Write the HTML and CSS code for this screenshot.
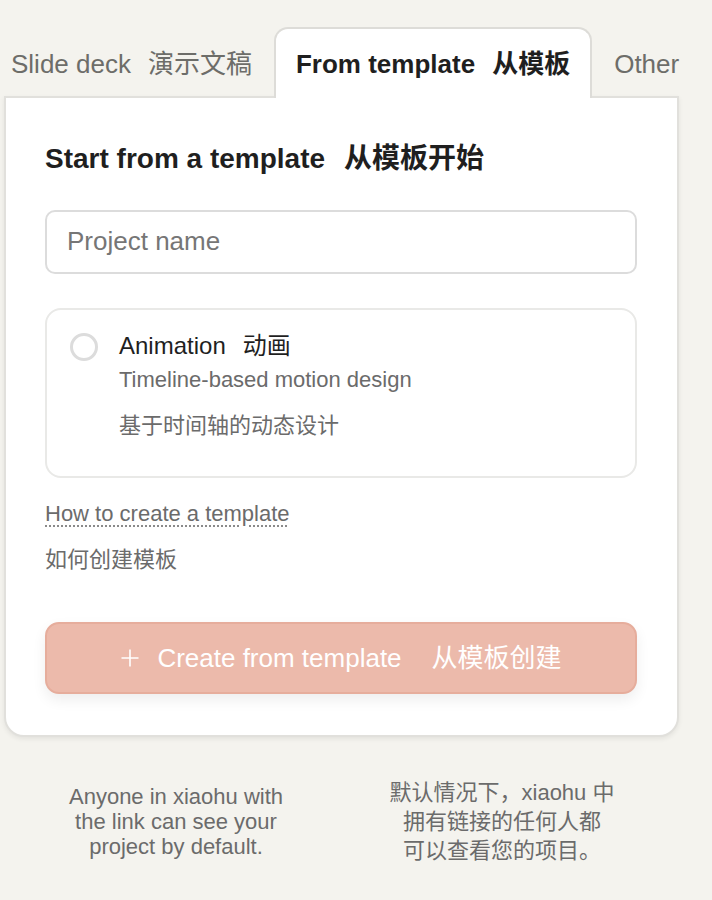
FILE: index.html
```html
<!DOCTYPE html>
<html lang="en">
<head>
<meta charset="utf-8">
<title>From template</title>
<link rel="stylesheet" href="styles.css">
</head>
<body>
<div class="page">
  <div class="tabs">
    <div class="tab">Slide deck<span class="zh">演示文稿</span></div>
    <div class="tab active">From template<span class="zh">从模板</span></div>
    <div class="tab">Other</div>
  </div>
  <div class="card">
    <h2 class="heading">Start from a template<span class="zh-h">从模板开始</span></h2>
    <input class="input" type="text" placeholder="Project name">
    <div class="option">
      <span class="radio"></span>
      <div class="option-body">
        <div class="option-title">Animation<span class="zh-t">动画</span></div>
        <div class="option-desc">Timeline-based motion design</div>
        <div class="option-desc zh-desc">基于时间轴的动态设计</div>
      </div>
    </div>
    <div class="help"><span class="help-link">How to create a template</span></div>
    <div class="help-zh">如何创建模板</div>
    <button class="create" type="button">
      <svg class="plus" width="20" height="20" viewBox="0 0 20 20" aria-hidden="true"><path d="M10 1.5V18.5M1.5 10H18.5" stroke="#ffffff" stroke-width="1.6" fill="none"/></svg>
      <span>Create from template</span><span class="zh-b">从模板创建</span>
    </button>
  </div>
  <div class="footer">
    <p class="note">Anyone in xiaohu with<br>the link can see your<br>project by default.</p>
    <p class="note note-zh">默认情况下，xiaohu 中<br>拥有链接的任何人都<br>可以查看您的项目。</p>
  </div>
</div>
</body>
</html>
```
FILE: styles.css
```css
html, body {
  margin: 0;
  padding: 0;
  background: #f4f3ee;
}
body {
  font-family: "Liberation Sans", "Noto Sans CJK SC", sans-serif;
  color: #222222;
}
.page {
  padding: 27px 0 0 4px;
  width: 675px;
}
.tabs {
  display: flex;
  align-items: flex-end;
  margin-left: -15px;
  margin-bottom: -2px;
  white-space: nowrap;
}
.tab {
  font-size: 26px;
  line-height: 36px;
  padding: 17px 20px 16px;
  border: 2px solid transparent;
  border-bottom: 0;
  color: #6d6d69;
}
.tab .zh {
  margin-left: 17px;
}
.tab.active {
  position: relative;
  z-index: 1;
  background: #ffffff;
  border-color: #dddcd8;
  border-radius: 14px 14px 0 0;
  color: #1f1f1f;
  font-weight: bold;
}
.card {
  background: #ffffff;
  border: 2px solid #e1e0dc;
  border-radius: 0 0 20px 20px;
  box-shadow: 0 2px 5px rgba(0, 0, 0, 0.07);
  padding: 44px 40px 41px 39px;
}
.heading {
  margin: 0;
  font-size: 28px;
  line-height: 33.6px;
  font-weight: bold;
  color: #1f1f1f;
}
.zh-h {
  margin-left: 19px;
}
.input {
  display: block;
  box-sizing: border-box;
  width: 100%;
  height: 64px;
  margin-top: 34px;
  border: 2px solid #dcdcdc;
  border-radius: 10px;
  padding: 0 20px;
  font-family: "Liberation Sans", "Noto Sans CJK SC", sans-serif;
  font-size: 26px;
  color: #222222;
  background: #ffffff;
  outline: none;
}
.input::placeholder {
  color: #767676;
}
.option {
  display: flex;
  align-items: flex-start;
  gap: 21px;
  margin-top: 34px;
  border: 2px solid #e9e9e7;
  border-radius: 16px;
  padding: 22px 24px 36px 23px;
}
.radio {
  flex: none;
  box-sizing: border-box;
  width: 28px;
  height: 28px;
  margin-top: 1px;
  border: 3px solid #dcdcdc;
  border-radius: 50%;
}
.option-title {
  font-size: 24px;
  line-height: 28.8px;
  color: #1f1f1f;
}
.zh-t {
  margin-left: 17px;
}
.option-desc {
  margin-top: 6px;
  font-size: 22px;
  line-height: 28px;
  color: #6b6b6b;
}
.option-desc.zh-desc {
  margin-top: 18px;
}
.help {
  margin-top: 22px;
  font-size: 22px;
  line-height: 28px;
  color: #6b6b6b;
}
.help-link {
  text-decoration: underline dotted #8a8a8a;
  text-decoration-thickness: 1.5px;
  text-underline-offset: 4px;
}
.help-zh {
  margin-top: 18px;
  font-size: 22px;
  line-height: 28px;
  color: #6b6b6b;
}
.create {
  display: flex;
  align-items: center;
  justify-content: center;
  box-sizing: border-box;
  width: 100%;
  height: 72px;
  margin-top: 48px;
  border: 2px solid #e6ad9c;
  border-radius: 14px;
  background: #ecbaab;
  box-shadow: 0 6px 14px rgba(0, 0, 0, 0.07);
  color: #ffffff;
  font-family: "Liberation Sans", "Noto Sans CJK SC", sans-serif;
  font-size: 26px;
  line-height: 32px;
  padding: 0;
}
.plus {
  margin-right: 17px;
  flex: none;
}
.zh-b {
  margin-left: 30px;
}
.footer {
  display: grid;
  grid-template-columns: 1fr 1fr;
  column-gap: 56px;
  align-items: center;
  margin: 41px 0 0 37px;
  width: 596px;
}
.note {
  margin: 0;
  text-align: center;
  font-size: 22px;
  line-height: 25px;
  color: #6b6b6b;
}
.note-zh {
  line-height: 29px;
}
```
